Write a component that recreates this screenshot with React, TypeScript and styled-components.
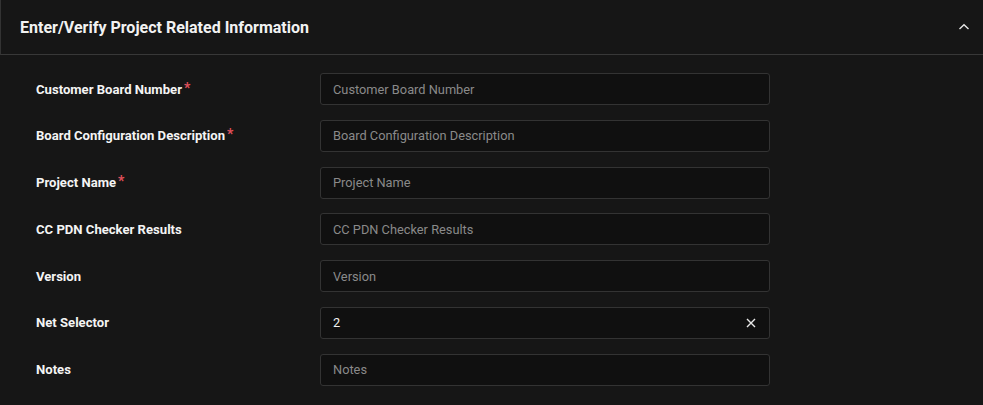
import React, { useState } from 'react';
import styled, { createGlobalStyle } from 'styled-components';

const GlobalStyle = createGlobalStyle`
    html, body {
        margin: 0;
        padding: 0;
        background: #161616;
        font-family: Roboto, "Liberation Sans", sans-serif;
    }
`;

type Field = {
    key: string;
    label: string;
    required?: boolean;
};

const fields: Field[] = [
    { key: 'boardNumber', label: 'Customer Board Number', required: true },
    { key: 'boardConfig', label: 'Board Configuration Description', required: true },
    { key: 'projectName', label: 'Project Name', required: true },
    { key: 'pdnResults', label: 'CC PDN Checker Results' },
    { key: 'version', label: 'Version' },
];

export default function App() {
    const [values, setValues] = useState<Record<string, string>>({});
    const [net, setNet] = useState<string>('2');
    const [notes, setNotes] = useState<string>('');

    const update = (key: string) => (e: React.ChangeEvent<HTMLInputElement>) => {
        setValues({ ...values, [key]: e.target.value });
    };

    return (
        <Panel>
            <GlobalStyle />
            <Header>
                <Title>Enter/Verify Project Related Information</Title>
                <Toggle aria-label="collapse">
                    <svg width="12" height="8" viewBox="0 0 12 8" fill="none">
                        <path d="M1.5 6L6 1.8L10.5 6" stroke="#e6e6e6" strokeWidth="1.4" />
                    </svg>
                </Toggle>
            </Header>
            <Body>
                {fields.map(f => (
                    <Row key={f.key}>
                        <Label>
                            {f.label}
                            {f.required && <Star>*</Star>}
                        </Label>
                        <InputBox>
                            <Input
                                placeholder={f.label}
                                value={values[f.key] || ''}
                                onChange={update(f.key)}
                            />
                        </InputBox>
                    </Row>
                ))}
                <Row>
                    <Label>Net Selector</Label>
                    <InputBox>
                        <Input value={net} onChange={e => setNet(e.target.value)} />
                        {net && (
                            <Clear onClick={() => setNet('')} aria-label="clear">
                                <svg width="10" height="10" viewBox="0 0 10 10">
                                    <path d="M1 1L9 9M9 1L1 9" stroke="#e8e8e8" strokeWidth="1.4" />
                                </svg>
                            </Clear>
                        )}
                    </InputBox>
                </Row>
                <Row>
                    <Label>Notes</Label>
                    <InputBox>
                        <Input placeholder="Notes" value={notes} onChange={e => setNotes(e.target.value)} />
                    </InputBox>
                </Row>
            </Body>
        </Panel>
    );
}

const Panel = styled.div`
    width: 100%;
    min-height: 405px;
    box-sizing: border-box;
    background: #161616;
    color: #ffffff;
`;

const Header = styled.div`
    height: 55px;
    box-sizing: border-box;
    display: flex;
    align-items: center;
    justify-content: space-between;
    padding: 0 11px 0 19px;
    border-left: 1px solid #333333;
    border-bottom: 1px solid #383838;
`;

const Title = styled.div`
    font-size: 16px;
    font-weight: 700;
    color: #f2f2f2;
`;

const Toggle = styled.button`
    background: none;
    border: none;
    padding: 0;
    width: 16px;
    height: 16px;
    display: flex;
    align-items: center;
    justify-content: center;
    cursor: pointer;
`;

const Body = styled.div`
    display: flex;
    flex-direction: column;
    gap: 14.8px;
    padding: 18px 0 18px 36px;
`;

const Row = styled.div`
    display: grid;
    grid-template-columns: 284px 450px;
    align-items: center;
`;

const Label = styled.div`
    font-size: 13.1px;
    font-weight: 700;
    color: #f4f4f4;
    display: flex;
    align-items: flex-start;
`;

const Star = styled.span`
    color: #e0505a;
    margin-left: 2px;
    font-size: 14px;
    line-height: 1;
    margin-top: -1px;
`;

const InputBox = styled.div`
    height: 32px;
    box-sizing: border-box;
    border: 1px solid #333333;
    border-radius: 3px;
    background: #101010;
    display: flex;
    align-items: center;
    padding: 0 12px;
`;

const Input = styled.input`
    flex: 1;
    min-width: 0;
    background: none;
    border: none;
    outline: none;
    padding: 0;
    font-family: Roboto, "Liberation Sans", sans-serif;
    font-size: 12.8px;
    color: #f2f2f2;
    &::placeholder {
        color: #8a8a8a;
    }
`;

const Clear = styled.button`
    background: none;
    border: none;
    padding: 0;
    margin-right: 1px;
    display: flex;
    align-items: center;
    cursor: pointer;
`;
